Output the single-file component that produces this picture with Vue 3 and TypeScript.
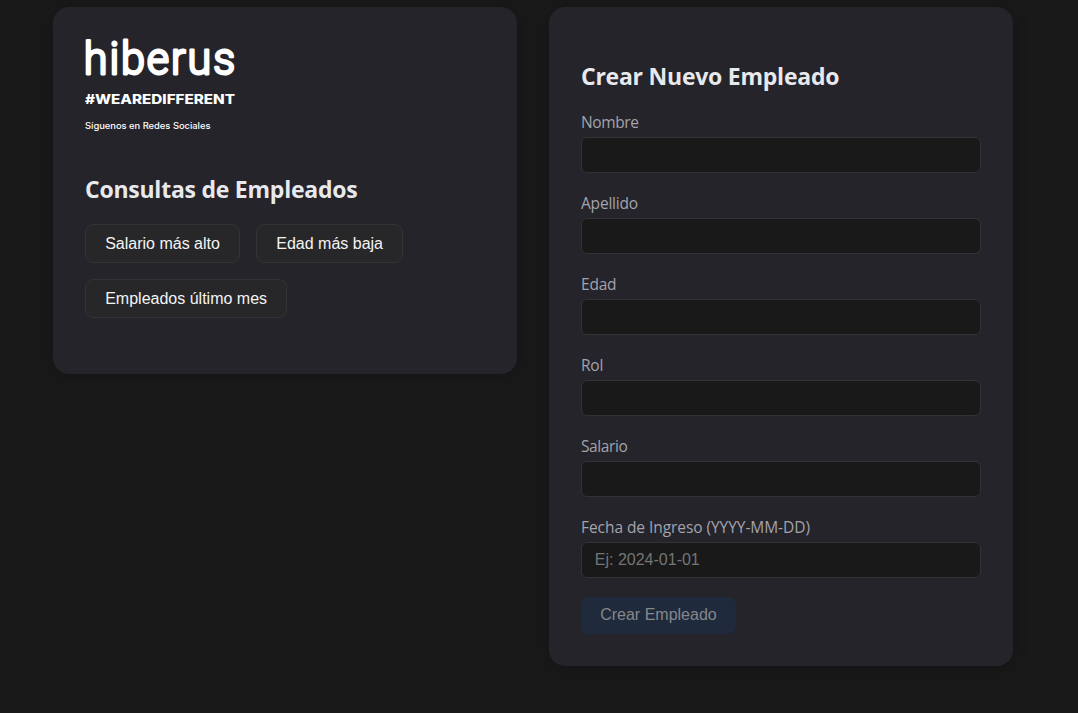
<script setup lang="ts">
import { reactive } from 'vue'

interface Field {
  key: string
  label: string
  placeholder?: string
}

const fields: Field[] = [
  { key: 'nombre', label: 'Nombre' },
  { key: 'apellido', label: 'Apellido' },
  { key: 'edad', label: 'Edad' },
  { key: 'rol', label: 'Rol' },
  { key: 'salario', label: 'Salario' },
  { key: 'fecha', label: 'Fecha de Ingreso (YYYY-MM-DD)', placeholder: 'Ej: 2024-01-01' },
]

const queries: string[] = ['Salario más alto', 'Edad más baja', 'Empleados último mes']

const form = reactive<Record<string, string>>({})
</script>

<template>
  <main class="page">
    <section class="card queries">
      <svg class="logo" width="152" height="102" viewBox="0 0 152 102" role="img" aria-label="hiberus">
        <text class="brand" transform="scale(0.96 1)" x="-1.2" y="35.4" textLength="157.5" lengthAdjust="spacing">hiberus</text>
        <text class="motto" x="0" y="65" textLength="150" lengthAdjust="spacingAndGlyphs">#WEAREDIFFERENT</text>
        <text class="follow" x="0" y="90" textLength="125.5" lengthAdjust="spacingAndGlyphs">Síguenos en Redes Sociales</text>
      </svg>
      <h2 class="title title-queries">Consultas de Empleados</h2>
      <div class="actions">
        <button v-for="q in queries" :key="q" type="button" class="query">{{ q }}</button>
      </div>
    </section>

    <section class="card create">
      <h2 class="title title-create">Crear Nuevo Empleado</h2>
      <form @submit.prevent>
        <div v-for="f in fields" :key="f.key" class="group">
          <label :for="f.key" :class="f.key">{{ f.label }}</label>
          <input :id="f.key" v-model="form[f.key]" type="text" :placeholder="f.placeholder" />
        </div>
        <button class="submit" type="submit" disabled>Crear Empleado</button>
      </form>
    </section>
  </main>
</template>

<style>
html,
body {
  background: #19191a;
}
</style>

<style scoped>
.page {
  box-sizing: border-box;
  width: 1078px;
  height: 713px;
  padding: 7px 65px 0 53px;
  display: flex;
  align-items: flex-start;
  gap: 32px;
  background: #19191a;
  font-family: "Open Sans", "Noto Sans", sans-serif;
  overflow: hidden;
}
.card {
  box-sizing: border-box;
  width: 464px;
  flex: none;
  padding: 32px;
  border-radius: 16px;
  background: #25242a;
  box-shadow: 0 2px 16px rgba(0, 0, 0, 0.2);
}
.queries {
  height: 367px;
}
.create {
  height: 659px;
}
.logo {
  display: block;
  overflow: visible;
}
.logo text {
  fill: #fff;
}
.brand {
  font: 300 45px Roboto, sans-serif;
  stroke: #fff;
  stroke-width: 2.8px;
  stroke-linejoin: round;
}
.motto {
  font: 800 12.8px Inter, "Open Sans", sans-serif;
}
.follow {
  font: 500 8.8px Inter, "Open Sans", sans-serif;
}
.title {
  margin: 0;
  color: #e8e9ec;
  font-size: 23px;
  font-weight: 700;
  line-height: 32px;
  letter-spacing: -0.24px;
  white-space: nowrap;
}
.title-queries {
  margin-top: 32px;
}
.title-create {
  margin-top: 21px;
}
.actions {
  display: flex;
  flex-wrap: wrap;
  gap: 16px;
  margin-top: 19px;
}
button {
  box-sizing: border-box;
  margin: 0;
  border-radius: 8px;
  font: 16px "Liberation Sans", Arial, sans-serif;
  white-space: nowrap;
}
.query {
  height: 39px;
  padding: 0 19.2px;
  border: 1px solid #333335;
  background: #272729;
  color: #f4f4f5;
}
form {
  margin-top: 15px;
}
.group {
  margin-bottom: 15px;
}
label {
  display: block;
  height: 30px;
  color: #a2a3ac;
  font-size: 15.5px;
  line-height: 30px;
  letter-spacing: -0.2px;
  white-space: nowrap;
}
label.nombre,
label.salario {
  letter-spacing: -0.4px;
}
label.fecha {
  letter-spacing: -0.06px;
}
input {
  display: block;
  box-sizing: border-box;
  width: 400px;
  height: 36px;
  padding: 0 12.8px;
  border: 1px solid #333335;
  border-radius: 6px;
  outline: none;
  background: #19191a;
  color: #f4f4f5;
  font: 16px "Liberation Sans", Arial, sans-serif;
}
input::placeholder {
  color: #757575;
  opacity: 1;
}
.submit {
  display: block;
  height: 37px;
  margin-top: 19px;
  padding: 0 19.2px 2px;
  border: 0;
  background: #1f2a3c;
  color: #85878b;
}
</style>
